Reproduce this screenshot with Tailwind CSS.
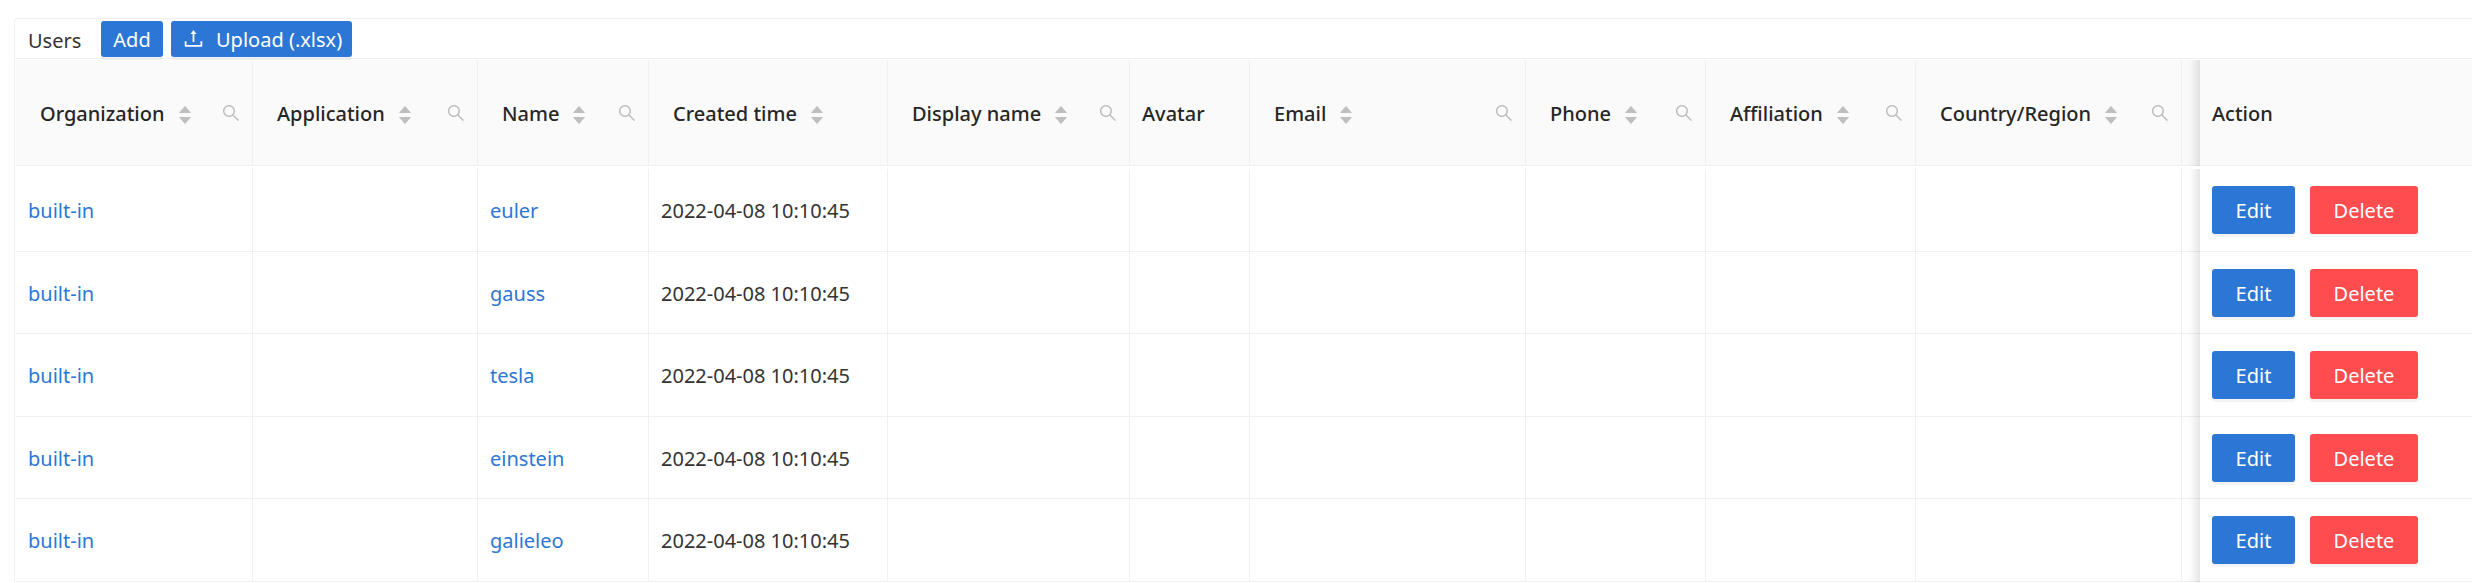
<!DOCTYPE html>
<html lang="en">
<head>
<meta charset="utf-8">
<title>Users</title>
<script src="https://cdn.jsdelivr.net/npm/@tailwindcss/browser@4"></script>
</head>
<body class="bg-white pt-[18px] pl-[14px] font-['Noto_Sans','Open_Sans',sans-serif] text-xl text-[#333333] overflow-x-hidden">
<svg class="hidden" aria-hidden="true">
  <symbol id="search" viewBox="64 64 896 896"><path d="M909.6 854.5L649.9 594.8C690.2 542.7 712 479 712 412c0-80.2-31.3-155.4-87.9-212.1-56.6-56.7-132-87.9-212.1-87.9s-155.5 31.3-212.1 87.9C143.2 256.5 112 331.8 112 412c0 80.1 31.3 155.5 87.9 212.1C256.5 680.8 331.8 712 412 712c67 0 130.6-21.8 182.7-62l259.7 259.6a8.2 8.2 0 0011.6 0l43.6-43.5a8.2 8.2 0 000-11.6zM570.4 570.4C528 612.7 471.8 636 412 636s-116-23.3-158.4-65.6C211.3 528 188 471.8 188 412s23.3-116.1 65.6-158.4C296 211.3 352.2 188 412 188s116.1 23.2 158.4 65.6S636 352.2 636 412s-23.3 116.1-65.6 158.4z"/></symbol>
  <symbol id="up" viewBox="160 300 704 424"><path d="M858.9 689L530.5 308.2c-9.4-10.9-27.5-10.9-37 0L165.1 689c-12.2 14.2-1.2 35 18.5 35h656.8c19.7 0 30.7-20.8 18.5-35z"/></symbol>
  <symbol id="down" viewBox="160 300 704 424"><path d="M840.4 300H183.6c-19.7 0-30.7 20.8-18.5 35l328.5 380.8c9.4 10.9 27.5 10.9 37 0L858.9 335c12.2-14.2 1.2-35-18.5-35z"/></symbol>
</svg>
<main class="rounded-tl border-t border-l border-[#f0f0f0]">
  <header class="flex h-10 items-center border-b border-[#f0f0f0] pl-[13px]">
    <h1 class="w-[73px] pt-1">Users</h1>
    <div class="flex gap-2">
      <button class="flex h-9 w-[62px] items-center justify-center rounded-[3px] bg-[#2c77d5] pt-0.5 text-white shadow-[0_3px_0_#0000000b]">Add</button>
      <button class="flex h-9 items-center gap-3 rounded-[3px] bg-[#2c77d5] pr-2.5 pl-3 text-white shadow-[0_3px_0_#0000000b]">
        <svg class="size-[21px] fill-current" viewBox="64 64 896 896" aria-hidden="true"><path d="M400 317.7h73.9V656c0 4.4 3.6 8 8 8h60c4.4 0 8-3.6 8-8V317.7H624c6.7 0 10.4-7.7 6.3-12.9L518.3 163a8 8 0 00-12.6 0l-112 141.7c-4.1 5.3-.4 13 6.3 13zM878 626h-60c-4.4 0-8 3.6-8 8v154H214V634c0-4.4-3.6-8-8-8h-60c-4.4 0-8 3.6-8 8v198c0 17.7 14.3 32 32 32h684c17.7 0 32-14.3 32-32V634c0-4.4-3.6-8-8-8z"/></svg>
        <span class="pt-0.5">Upload (.xlsx)</span>
      </button>
    </div>
  </header>
  <div class="pt-px pl-px">
    <table class="w-full table-fixed border-separate border-spacing-0 text-left">
      <colgroup>
        <col class="w-[237px]"><col class="w-[225px]"><col class="w-[171px]"><col class="w-[239px]"><col class="w-[242px]"><col class="w-[120px]"><col class="w-[276px]"><col class="w-[180px]"><col class="w-[210px]"><col class="w-[266px]"><col class="w-[18px]"><col>
      </colgroup>
      <thead class="text-[#262626]"><tr id="head" class="h-[106px] bg-[#fafafa]"></tr></thead>
      <tbody id="rows"><tr class="h-[3px]"><td colspan="12" class="p-0"></td></tr></tbody>
    </table>
  </div>
</main>
<script>
  // label, sortable, searchable
  const columns = [
    ["Organization", 1, 1], ["Application", 1, 1], ["Name", 1, 1], ["Created time", 1, 0],
    ["Display name", 1, 1], ["Avatar", 0, 0], ["Email", 1, 1], ["Phone", 1, 1],
    ["Affiliation", 1, 1], ["Country/Region", 1, 1]
  ];
  const users = ["euler", "gauss", "tesla", "einstein", "galieleo"];
  // Fixed column: casts a shadow over the cells to its left
  const fixed = "relative border-b border-[#f0f0f0] p-0 pl-3 after:absolute after:inset-y-0 after:-bottom-px after:right-full after:w-[45px] after:shadow-[inset_-15px_0_12px_-12px_#00000026] after:pointer-events-none";
  document.getElementById("head").innerHTML = columns.map(([label, sort, search]) => `
    <th scope="col" class="border-r border-b border-[#f0f0f0] p-0 font-medium">
      <div class="flex items-center ${sort ? "pl-6" : "pl-3"} pr-3">
        <span class="pt-0.5 whitespace-nowrap">${label}</span>
        ${sort ? `<button aria-label="Sort by ${label}" class="mt-1 ml-[14px] flex flex-col gap-1 fill-[#bfbfbf]"><svg class="h-[7px] w-3"><use href="#up"/></svg><svg class="h-[7px] w-3"><use href="#down"/></svg></button>` : ""}
        ${search ? `<button aria-label="Search ${label}" class="ml-auto fill-[#bfbfbf]"><svg class="size-[18px]"><use href="#search"/></svg></button>` : ""}
      </div>
    </th>`).join("") + `<td class="border-b border-[#f0f0f0] p-0"></td><th scope="col" class="${fixed} font-medium"><div class="pt-0.5">Action</div></th>`;
  const cell = (html) => `<td class="border-r border-b border-[#f0f0f0] p-0 pt-0.5 pl-3">${html}</td>`;
  document.getElementById("rows").insertAdjacentHTML("beforeend", users.map((name, i) => `
    <tr class="${i % 2 ? "h-[82px]" : "h-[83px]"}">
      ${cell('<a href="#" class="text-[#2c77d5]">built-in</a>')}${cell("")}
      ${cell(`<a href="#" class="text-[#2c77d5]">${name}</a>`)}
      ${cell("2022-04-08 10:10:45")}${cell("").repeat(6)}
      <td class="border-b border-[#f0f0f0] p-0"></td>
      <td class="${fixed}">
        <div class="flex gap-[15px]">
          <button class="h-12 w-[83px] rounded-[3px] bg-[#2c77d5] pt-0.5 text-white shadow-[0_3px_0_#0000000b]">Edit</button>
          <button class="h-12 w-[108px] rounded-[3px] bg-[#ff4d4f] pt-0.5 text-white shadow-[0_3px_0_#0000000b]">Delete</button>
        </div>
      </td>
    </tr>`).join(""));
</script>
</body>
</html>
